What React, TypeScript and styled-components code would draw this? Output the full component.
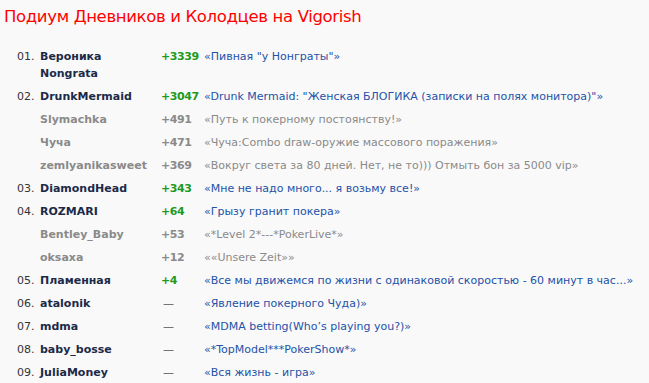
import React from 'react'
import styled, { createGlobalStyle } from 'styled-components'

const GlobalStyle = createGlobalStyle`
  html, body {
    margin: 0;
    padding: 0;
    background: #f9f9f9;
  }
  body {
    font-family: "DejaVu Sans", Tahoma, Verdana, sans-serif;
  }
`

type Entry = {
  place?: string
  name: string
  score?: string
  title: string
  sub?: boolean
}

const entries: Entry[] = [
  { place: '01.', name: 'Вероника Nongrata', score: '+3339', title: '«Пивная "у Нонграты"»' },
  { place: '02.', name: 'DrunkMermaid', score: '+3047', title: '«Drunk Mermaid: "Женская БЛОГИКА (записки на полях монитора)"»' },
  { name: 'Slymachka', score: '+491', title: '«Путь к покерному постоянству!»', sub: true },
  { name: 'Чуча', score: '+471', title: '«Чуча:Combo draw-оружие массового поражения»', sub: true },
  { name: 'zemlyanikasweet', score: '+369', title: '«Вокруг света за 80 дней. Нет, не то))) Отмыть бон за 5000 vip»', sub: true },
  { place: '03.', name: 'DiamondHead', score: '+343', title: '«Мне не надо много... я возьму все!»' },
  { place: '04.', name: 'ROZMARI', score: '+64', title: '«Грызу гранит покера»' },
  { name: 'Bentley_Baby', score: '+53', title: '«*Level 2*---*PokerLive*»', sub: true },
  { name: 'oksaxa', score: '+12', title: '««Unsere Zeit»»', sub: true },
  { place: '05.', name: 'Пламенная', score: '+4', title: '«Все мы движемся по жизни с одинаковой скоростью - 60 минут в час...»' },
  { place: '06.', name: 'atalonik', title: '«Явление покерного Чуда)»' },
  { place: '07.', name: 'mdma', title: '«MDMA betting(Who’s playing you?)»' },
  { place: '08.', name: 'baby_bosse', title: '«*TopModel***PokerShow*»' },
  { place: '09.', name: 'JuliaMoney', title: '«Вся жизнь - игра»' },
]

const Page = styled.div`
  padding: 6px 4px 0;
`

const Heading = styled.h1`
  margin: 0 0 17px;
  font-size: 16.5px;
  font-weight: normal;
  letter-spacing: -0.35px;
  line-height: 22px;
  color: #ff0000;
`

const List = styled.div`
  display: grid;
  grid-template-columns: 23px 121px 43px 1fr;
  padding-left: 13px;
  font-size: 11px;
  line-height: 17px;
`

// each entry spreads its cells straight into the list grid
const Row = styled.div`
  display: contents;
  & > * {
    padding: 3px 0;
  }
`

const Place = styled.span`
  color: #333333;
`

const Name = styled.span<{ $sub?: boolean }>`
  font-weight: bold;
  color: ${({ $sub }) => ($sub ? '#8a8a8a' : '#1c2a48')};
`

const Score = styled.span<{ $sub?: boolean; $empty?: boolean }>`
  font-weight: bold;
  letter-spacing: -0.4px;
  color: ${({ $sub, $empty }) => ($empty ? '#555555' : $sub ? '#8a8a8a' : '#1e9a1e')};
  ${({ $empty }) => ($empty ? 'font-weight: normal; padding-left: 2px;' : '')}
`

const Title = styled.span<{ $sub?: boolean }>`
  color: ${({ $sub }) => ($sub ? '#8a8a8a' : '#2352a8')};
  white-space: nowrap;
`

export default function App() {
  return (
    <>
      <GlobalStyle />
      <Page>
        <Heading>Подиум Дневников и Колодцев на Vigorish</Heading>
        <List>
          {entries.map((e, i) => (
            <Row key={i}>
              <Place>{e.place ?? ''}</Place>
              <Name $sub={e.sub}>{e.name}</Name>
              <Score $sub={e.sub} $empty={!e.score}>{e.score ?? '—'}</Score>
              <Title $sub={e.sub}>{e.title}</Title>
            </Row>
          ))}
        </List>
      </Page>
    </>
  )
}
